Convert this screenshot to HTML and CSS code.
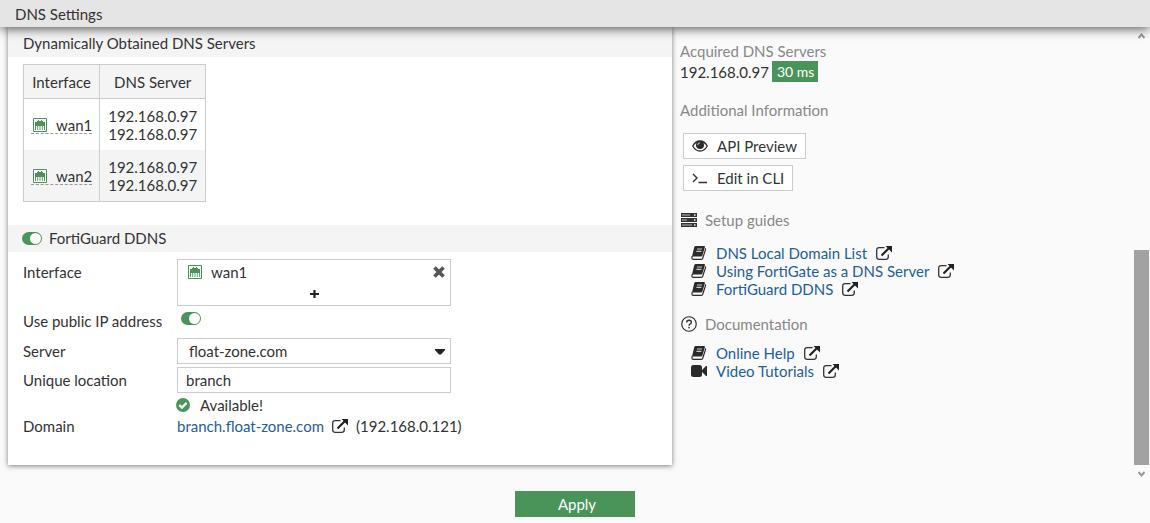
FILE: index.html
```html
<!DOCTYPE html>
<html lang="en">
<head>
	<meta charset="utf-8">
	<title>DNS Settings</title>
	<link rel="stylesheet" href="styles.css">
</head>
<body>
	<!-- shared icons -->
	<svg class="sprite" aria-hidden="true">
		<symbol id="port" viewBox="0 0 14 14">
			<path fill="#fff" stroke="#4a9459" d="M.5.5h13v13H.5z"/>
			<path fill="#4a9459" d="M2 8V4h2V3h1V2h1v1h2V2h1v1h1v1h2v4z"/>
			<path stroke="#4a9459" stroke-width=".9" d="M2.500 8v4M4.700 8v4M7 8v4M9.300 8v4M11.500 8v4"/>
		</symbol>
		<symbol id="external" viewBox="0 0 16 14">
			<path fill="none" stroke="#333" stroke-width="1.300" d="M8.500 1.700H3.200Q.7 1.700.7 4.200v6.600q0 2.500 2.500 2.500h6.600q2.500 0 2.500-2.500V8.500"/>
			<path fill="none" stroke="#222" stroke-width="2.200" d="M5.500 9.500L13 2"/>
			<path fill="#222" d="M9.500 0H16v6.500z"/>
		</symbol>
		<symbol id="book" viewBox="0 0 16 14">
			<path fill="#2b2b2b" d="M4.800 0H13q1.200 0 .9 1.200l-2.500 8.300q-.3 1.100-1.500 1.100H1L3.200 1.300Q3.600 0 4.800 0z"/>
			<path fill="none" stroke="#2b2b2b" stroke-width="1.200" d="M1.400 10Q0 13.300 2.200 13.300h8.200q1 0 1.300-1l2.800-8.600q.2-.8-.4-1.200"/>
			<path stroke="#ccc" stroke-width="1.200" d="M6 3h5M5.400 5.300h5"/>
		</symbol>
	</svg>

	<header class="titlebar">
		<h1>DNS Settings</h1>
	</header>

	<main class="content">
		<form class="panel" id="dns-form">
			<h2 class="section-title first">Dynamically Obtained DNS Servers</h2>
			<table class="servers">
				<thead>
					<tr><th>Interface</th><th>DNS Server</th></tr>
				</thead>
				<tbody>
					<tr>
						<td><span class="port-name"><svg class="port"><use href="#port"/></svg>wan1</span></td>
						<td>192.168.0.97<br>192.168.0.97</td>
					</tr>
					<tr>
						<td><span class="port-name"><svg class="port"><use href="#port"/></svg>wan2</span></td>
						<td>192.168.0.97<br>192.168.0.97</td>
					</tr>
				</tbody>
			</table>

			<h2 class="section-title">
				<input type="checkbox" class="toggle" id="ddns" checked>
				<label for="ddns">FortiGuard DDNS</label>
			</h2>
			<div class="fields">
				<span class="label">Interface</span>
				<div class="picker">
					<div class="picked">
						<svg class="port"><use href="#port"/></svg>
						<span>wan1</span>
						<button type="button" class="icon-button remove" aria-label="Remove wan1">
							<svg width="12" height="12" viewBox="0 0 12 12"><path stroke="#555" stroke-width="3.600" d="M1.500 1.500l9 9M10.500 1.500l-9 9"/></svg>
						</button>
					</div>
					<button type="button" class="icon-button add" aria-label="Add interface">
						<svg width="9" height="8" viewBox="0 0 9 8"><path stroke="#222" stroke-width="2.200" d="M4.500 0v8M0 4h9"/></svg>
					</button>
				</div>

				<label class="label public" for="public-ip">Use public IP address</label>
				<div class="toggle-cell"><input type="checkbox" class="toggle" id="public-ip" checked></div>

				<label class="label" for="server">Server</label>
				<div class="select-wrap">
					<select id="server"><option>float-zone.com</option></select>
					<svg class="caret" width="10" height="6" viewBox="0 0 10 6"><path fill="#222" d="M0 0h10v1L6 5.500H4L0 1z"/></svg>
				</div>

				<label class="label" for="location">Unique location</label>
				<input type="text" id="location" value="branch">

				<p class="status">
					<svg width="14" height="14" viewBox="0 0 14 14"><circle cx="7" cy="7" r="7" fill="#4a9459"/><path fill="none" stroke="#fff" stroke-width="2.200" d="M3.300 7l2.600 2.600 4.700-4.700"/></svg>
					Available!
				</p>

				<span class="label domain-label">Domain</span>
				<div class="domain">
					<a href="#">branch.float-zone.com</a>
					<svg class="external"><use href="#external"/></svg>
					<span>(192.168.0.121)</span>
				</div>
			</div>
		</form>

		<aside class="info">
			<h3>Acquired DNS Servers</h3>
			<p class="acquired">192.168.0.97 <span class="latency">30 ms</span></p>

			<h3 class="additional">Additional Information</h3>
			<div class="tools">
				<button type="button">
					<svg width="16" height="12" viewBox="0 0 16 12"><path fill="none" stroke="#2b2b2b" stroke-width="1.300" d="M.7 6Q3.500 1 8 1t7.300 5Q12.500 11 8 11T.7 6z"/><circle cx="8" cy="5" r="4" fill="#2b2b2b"/><path fill="none" stroke="#fff" stroke-width=".8" d="M5.800 5Q5.900 2.900 8 2.800"/></svg>
					API Preview
				</button>
				<button type="button">
					<svg width="16" height="12" viewBox="0 0 16 12"><path fill="none" stroke="#333" stroke-width="1.400" d="M1 2l4 4-4 4M6.500 10.500H15"/></svg>
					Edit in CLI
				</button>
			</div>

			<h3 class="group">
				<svg width="16" height="14" viewBox="0 0 16 14"><path fill="#333" d="M0 0h16v4H0zM0 5h16v4H0zM0 10h16v4H0z"/><path stroke="#bbb" d="M1 2h8M1 7h5M1 12h10"/><path stroke="#fafafa" stroke-width="1.400" d="M13 2h1.500M13 7h1.500M13 12h1.500"/></svg>
				Setup guides
			</h3>
			<ul class="links">
				<li><svg class="book"><use href="#book"/></svg><a href="#">DNS Local Domain List</a><svg class="external"><use href="#external"/></svg></li>
				<li><svg class="book"><use href="#book"/></svg><a href="#">Using FortiGate as a DNS Server</a><svg class="external"><use href="#external"/></svg></li>
				<li><svg class="book"><use href="#book"/></svg><a href="#">FortiGuard DDNS</a><svg class="external"><use href="#external"/></svg></li>
			</ul>

			<h3 class="group">
				<svg width="16" height="16" viewBox="0 0 17 17"><circle cx="8.500" cy="8.500" r="7.700" fill="none" stroke="#333" stroke-width="1.300"/><path fill="none" stroke="#333" stroke-width="1.400" d="M6 6.800Q6 4.500 8.500 4.500T11 6.600Q11 7.800 9.500 8.600 8.500 9.200 8.500 10.300"/><circle cx="8.500" cy="12.300" r=".9" fill="#333"/></svg>
				Documentation
			</h3>
			<ul class="links docs">
				<li><svg class="book"><use href="#book"/></svg><a href="#">Online Help</a><svg class="external"><use href="#external"/></svg></li>
				<li><svg width="16" height="12" viewBox="0 0 16 12"><rect width="11" height="12" rx="2.500" fill="#2b2b2b"/><path fill="#2b2b2b" d="M11 5l4-4h1v10h-1l-4-4z"/></svg><a href="#">Video Tutorials</a><svg class="external"><use href="#external"/></svg></li>
			</ul>
		</aside>

		<div class="scrollbar" aria-hidden="true">
			<svg width="7" height="6" viewBox="0 0 7 6"><path fill="none" stroke="#999" stroke-width="2" d="M.5 5l3-3.500 3 3.500"/></svg>
			<div class="thumb"></div>
			<svg width="7" height="6" viewBox="0 0 7 6"><path fill="none" stroke="#999" stroke-width="2" d="M.5 1l3 3.500 3-3.500"/></svg>
		</div>
	</main>

	<footer class="actions">
		<button type="submit" form="dns-form" class="apply">Apply</button>
	</footer>
</body>
</html>
```

FILE: styles.css
```css
* {
	box-sizing: border-box;
}
body {
	margin: 0;
	background: #fafafa;
	color: #333;
	font: 15px/18px Lato, "Liberation Sans", sans-serif;
}
h1, h2, h3, p, ul {
	margin: 0;
	padding: 0;
	font-size: 15px;
	font-weight: normal;
}
a {
	color: #1e5e9a;
	text-decoration: none;
}
svg {
	flex: none;
}
button, input, select {
	font: inherit;
	color: inherit;
	margin: 0;
}
.sprite {
	position: absolute;
	width: 0;
	height: 0;
}
.port {
	width: 14px;
	height: 14px;
}
.external {
	width: 16px;
	height: 14px;
}
.book {
	width: 16px;
	height: 14px;
}

/* title bar */
.titlebar {
	position: relative;
	z-index: 1;
	height: 27px;
	padding: 5px 15px 0;
	background: #e5e5e5;
	box-shadow: 0 1px 12px rgba(0, 0, 0, 0.75);
}

/* page body */
.content {
	display: flex;
	align-items: flex-start;
	padding-left: 8px;
}
.panel {
	flex: 1;
	padding-bottom: 30px;
	background: #fff;
	box-shadow: 0 1px 5px rgba(0, 0, 0, 0.5);
}
.section-title {
	display: flex;
	align-items: center;
	gap: 7px;
	height: 27px;
	padding: 0 14px 1px;
	background: #f4f4f4;
}
.section-title.first {
	height: 30px;
	padding: 2px 15px 0;
}

.servers {
	margin: 7px 15px 23px;
	border-collapse: collapse;
	border: 1px solid #ccc;
}
.servers th, .servers td {
	padding: 8px 8px 7px;
	border-left: 1px solid #ccc;
	border-right: 1px solid #ccc;
	font-weight: normal;
}
.servers th {
	background: #f4f4f4;
	border-bottom: 1px solid #ccc;
}
.servers tr:nth-child(2) td {
	background: #f4f4f4;
}
.port-name {
	display: flex;
	align-items: center;
	gap: 9px;
	margin: 0 -1px;
	padding-left: 2px;
	border-bottom: 1px dashed #999;
	line-height: 16px;
}

/* DDNS form */
.fields {
	display: grid;
	grid-template-columns: 154px 274px;
	padding: 7px 15px 0;
}
.label {
	padding-top: 4px;
}
.label.public {
	padding-top: 6px;
}
.picker {
	height: 47px;
	padding: 3px 5px 0 10px;
	border: 1px solid #ccc;
}
.picked {
	display: flex;
	align-items: center;
}
.picked span {
	margin-left: 9px;
}
.icon-button {
	display: flex;
	padding: 0;
	border: 0;
	background: none;
	cursor: pointer;
}
.remove {
	margin-left: auto;
}
.add {
	margin: 9px auto 0;
	padding-right: 5px;
}
.toggle-cell {
	display: flex;
	height: 32px;
	padding: 6px 4px;
}
.toggle {
	appearance: none;
	flex: none;
	width: 20px;
	height: 13px;
	border-radius: 7px;
	background: #999;
}
.toggle::after {
	content: "";
	display: block;
	width: 11px;
	height: 11px;
	margin: 1px;
	border-radius: 50%;
	background: #fff;
}
.toggle:checked {
	background: #4a9459;
}
.toggle:checked::after {
	margin-left: 8px;
}
.select-wrap {
	position: relative;
	margin-bottom: 3px;
}
.select-wrap select, .fields input[type="text"] {
	display: block;
	width: 100%;
	height: 26px;
	padding: 0 8px;
	border: 1px solid #ccc;
	border-radius: 0;
	background: #fff;
}
.select-wrap select {
	appearance: none;
	padding: 0 11px;
}
.caret {
	position: absolute;
	top: 11px;
	right: 6px;
	pointer-events: none;
}
.status {
	grid-column: 2;
	display: flex;
	align-items: center;
	gap: 10px;
	margin: 3px 0 0 -1px;
}
.domain {
	display: flex;
	align-items: center;
	gap: 8px;
	white-space: nowrap;
}
.domain, .domain-label {
	padding-top: 3px;
}

/* side column */
.info {
	width: 454px;
	margin-left: 8px;
	padding-top: 15px;
}
.info h3 {
	color: #888;
}
.acquired {
	display: flex;
	align-items: center;
	gap: 3px;
	padding-top: 1px;
}
.latency {
	padding: 2px 4px 1px 5px;
	background: #4a9459;
	color: #fff;
	font-size: 14px;
}
.info .additional {
	margin-top: 19px;
}
.tools {
	display: flex;
	flex-direction: column;
	align-items: flex-start;
	gap: 6px;
	margin: 14px 3px 20px;
}
.tools button {
	display: flex;
	align-items: center;
	gap: 9px;
	height: 26px;
	padding: 0 8px;
	border: 1px solid #ccc;
	background: #fff;
}
.group {
	display: flex;
	align-items: center;
	gap: 8px;
	padding-left: 1px;
}
.links {
	margin: 15px 11px 17px;
	list-style: none;
}
.links.docs {
	margin-top: 11px;
}
.links li {
	display: flex;
	align-items: center;
	gap: 9px;
}

.scrollbar {
	display: flex;
	flex-direction: column;
	align-items: center;
	align-self: stretch;
	width: 16px;
	margin-bottom: -12px;
	padding: 6px 1px 0 0;
}
.thumb {
	width: 15px;
	height: 215px;
	margin: auto 0 6px;
	background: #a2a2a2;
}

.actions {
	display: flex;
	justify-content: center;
	padding: 26px 0 6px;
}
.apply {
	width: 120px;
	height: 26px;
	padding: 0 0 0 4px;
	border: 0;
	background: #4a9459;
	color: #fff;
}
```
